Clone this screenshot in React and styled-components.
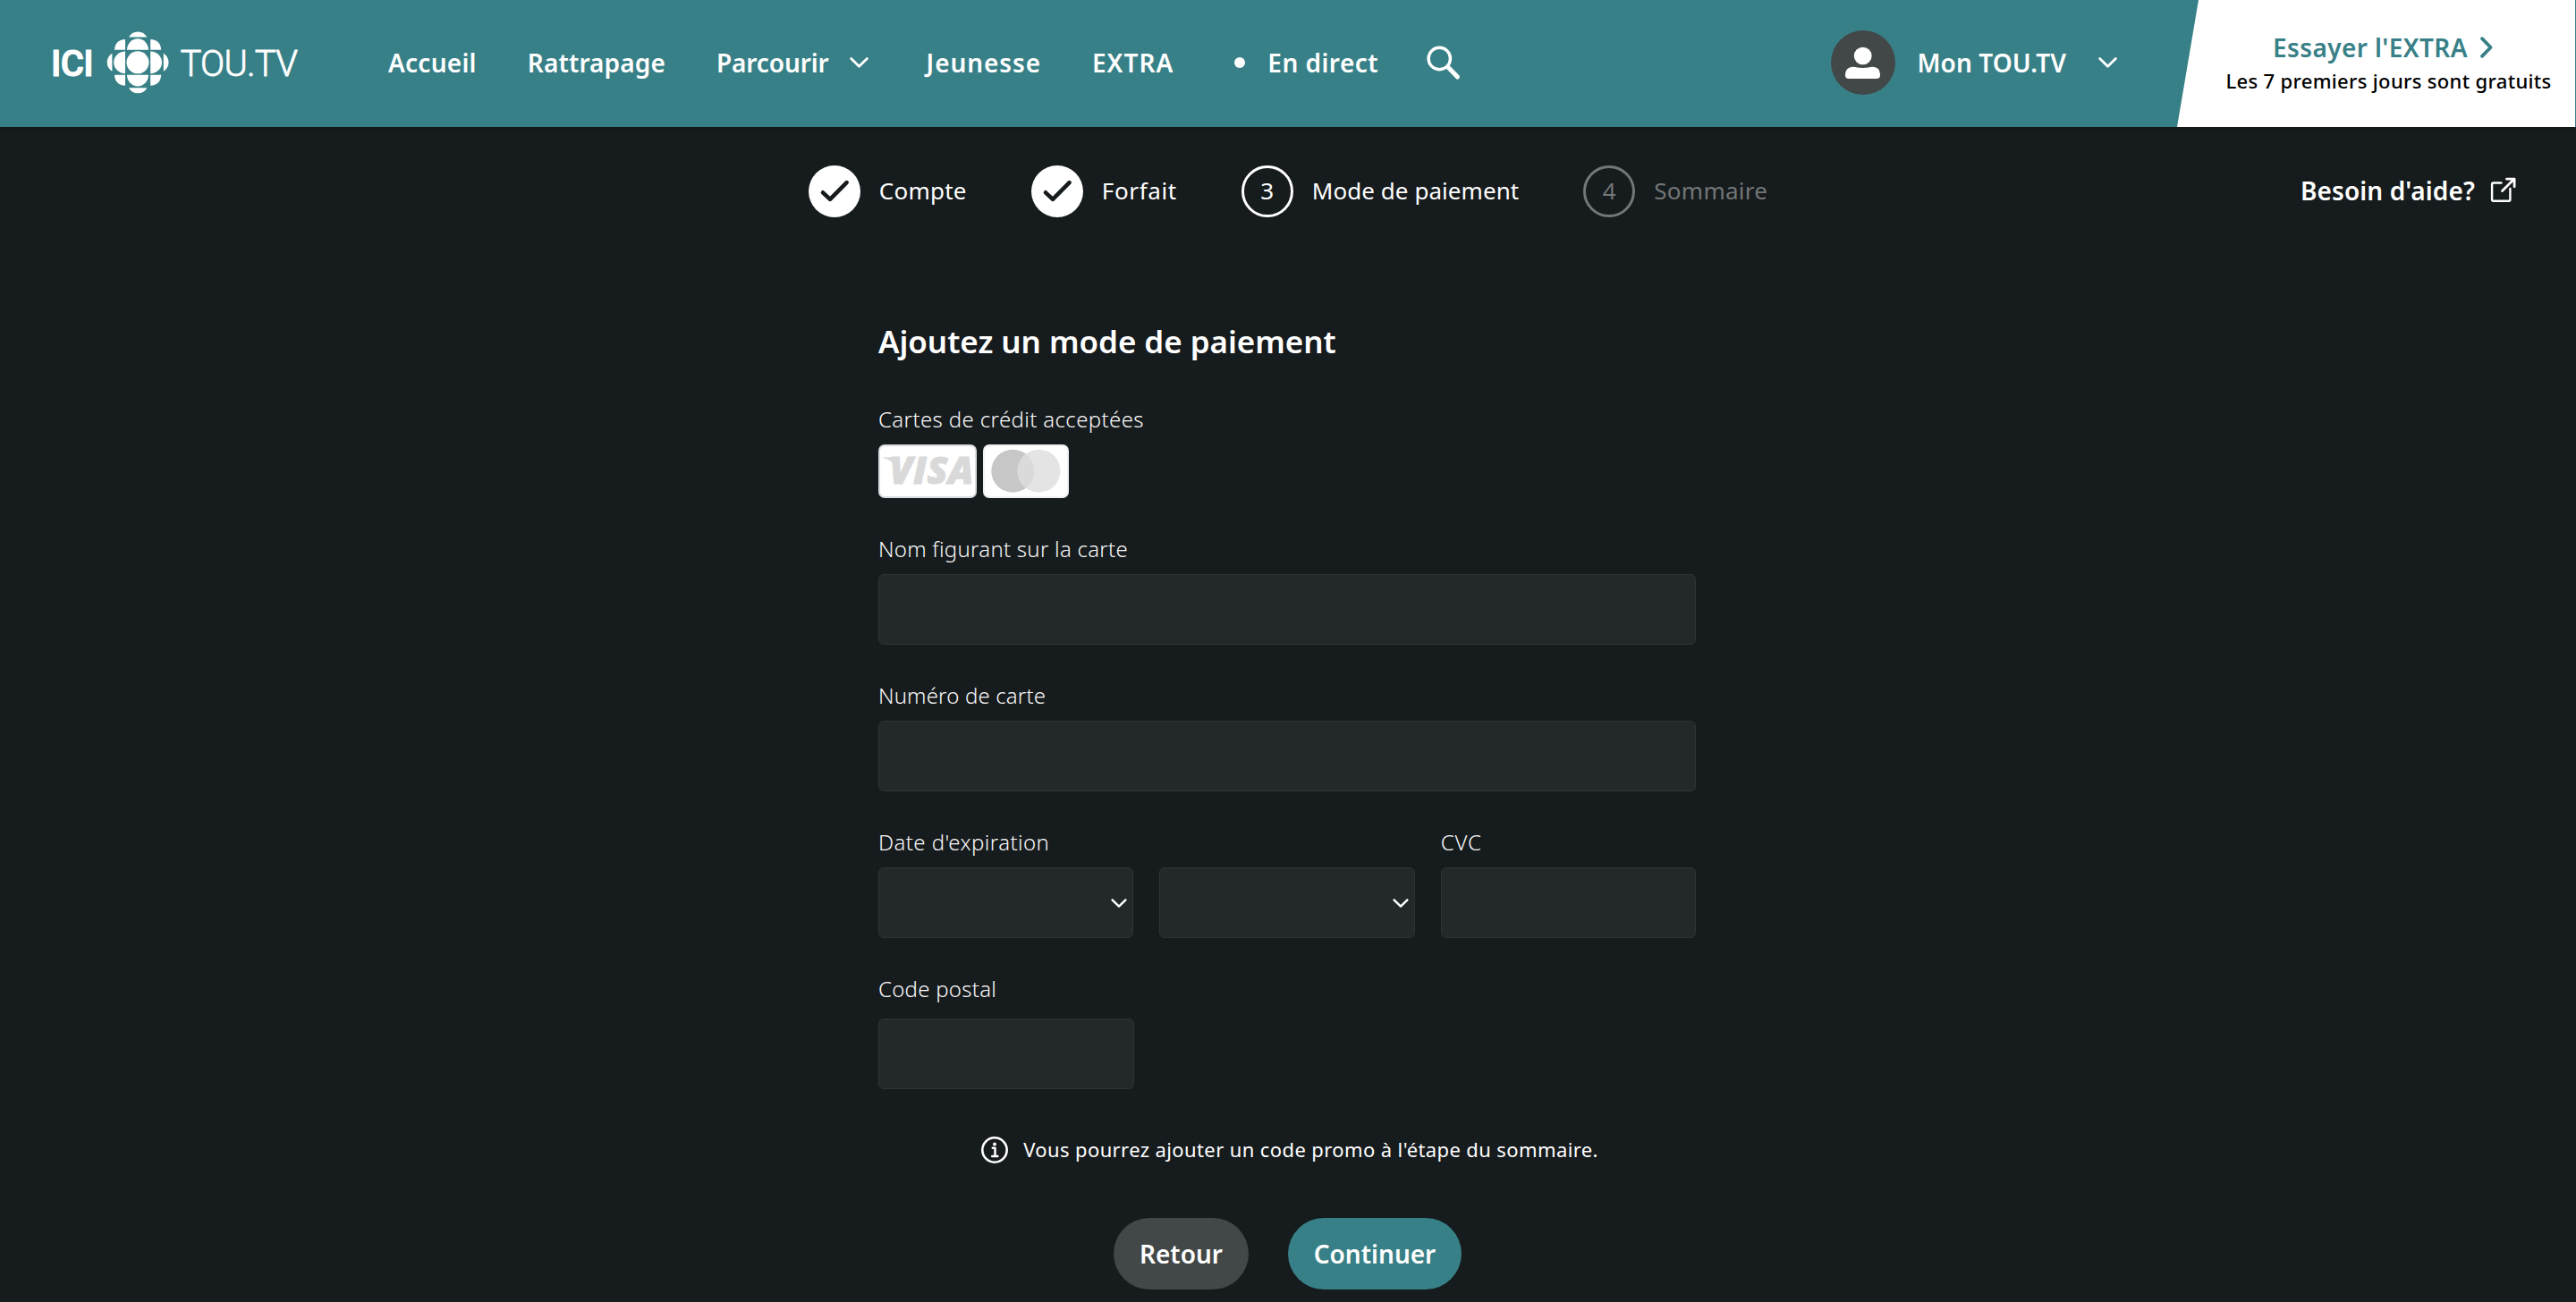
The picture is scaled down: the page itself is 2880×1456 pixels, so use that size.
import styled, { createGlobalStyle } from "styled-components";

const navItems = [
  { label: "Accueil", spacing: 0.25 },
  { label: "Rattrapage", spacing: 0.12 },
  { label: "Parcourir", spacing: -0.1, hasMenu: true },
  { label: "Jeunesse", spacing: 0.9, offset: 8 },
  { label: "EXTRA", spacing: 1.02 },
];

const steps = [
  { id: 1, label: "Compte", status: "done", spacing: 0.25 },
  { id: 2, label: "Forfait", status: "done", spacing: 0.63 },
  { id: 3, label: "Mode de paiement", status: "current", spacing: 0.06 },
  { id: 4, label: "Sommaire", status: "todo", spacing: 0.27 },
];

const Gem = () => (
  <g>
    <circle cx="154" cy="69.8" r="12.5" />
    <path d="M142 55.8a12 12.6 0 0 1 24 0z" />
    <path d="M142 83.8a12 12.6 0 0 0 24 0z" />
    <path d="M140 57.4v24.8a12.8 12.4 0 0 1 0-24.8z" />
    <path d="M168.2 57.4v24.8a12.8 12.4 0 0 0 0-24.8z" />
    <path d="M144 41.6a11.6 11.6 0 0 1 20.4 0z" />
    <path d="M144 98.2a11.6 11.6 0 0 0 20.4 0z" />
    <path d="M125.4 59.8v20a11.6 11.6 0 0 1 0-20z" />
    <path d="M182.8 59.8v20a11.6 11.6 0 0 0 0-20z" />
    <path d="M140 44v11.8h-12q.6-11 12-11.8z" />
    <path d="M168.2 44v11.8h12q-.6-11-12-11.8z" />
    <path d="M140 95.8V83.8h-12q.6 11.2 12 12z" />
    <path d="M168.2 95.8V83.8h12q-.6 11.2-12 12z" />
  </g>
);

const Logo = () => (
  <LogoSvg viewBox="50 30 290 80">
    <Gem />
    <LogoText x="57" y="84.5" textLength="47.5" $weight={500} $stroke={1.2}>
      ICI
    </LogoText>
    <LogoText x="201.5" y="84.5" textLength="131.5" $weight={300} $stroke={0.8}>
      TOU.TV
    </LogoText>
  </LogoSvg>
);

const CheckIcon = () => (
  <svg width="58" height="58" viewBox="0 0 58 58">
    <Stroke d="M16 30.3l8 7.6 18.6-18.7" $width={4.6} $color="#161b1d" />
  </svg>
);

const Chevron = ({ width = 21, height = 12, stroke = 2.8 }) => (
  <svg width={width} height={height} viewBox="0 0 21 12">
    <Stroke d="M1.6 1.6l8.9 8.7 8.9-8.7" $width={stroke} />
  </svg>
);

const SearchIcon = () => (
  <svg width="38" height="38" viewBox="0 0 38 38">
    <circle cx="14.3" cy="14.5" r="12.2" fill="none" stroke="#fff" strokeWidth="3.4" />
    <Stroke d="M23.5 23.7l11 11.3" $width={5} />
  </svg>
);

const UserIcon = () => (
  <svg width="72" height="72" viewBox="0 0 72 72" fill="#fff">
    <ellipse cx="35.7" cy="28.5" rx="9.9" ry="9.8" />
    <path d="M20.5 54q-4.5 0-4.5-3.5C16 44 19 41 25 40.8c3 0 6 1.3 10.7 1.3s7.7-1.3 10.7-1.3C52.5 41 55 44 55 50.5q0 3.5-4.5 3.5z" />
  </svg>
);

const ExternalIcon = () => (
  <svg width="29" height="29" viewBox="0 0 29 29">
    <Stroke
      d="M12.5 6.5H3.6a1.5 1.5 0 0 0-1.5 1.5v17.3a1.5 1.5 0 0 0 1.5 1.5h17.3a1.5 1.5 0 0 0 1.5-1.5V13"
      $width={2.4}
    />
    <Stroke d="M13.5 15.5L26.5 2.6M18.5 2.2h8.6v8.6" $width={2.8} />
  </svg>
);

const InfoIcon = () => (
  <svg width="30" height="30" viewBox="0 0 30 30">
    <circle cx="15" cy="15" r="13.7" fill="none" stroke="#fff" strokeWidth="2.6" />
    <circle cx="15" cy="8.6" r="2" fill="#fff" />
    <Stroke d="M12.8 12.8h2.7v8.9M12.2 22h6.2" $width={2.5} />
  </svg>
);

const VisaCard = () => (
  <Card $width={110} $border="#d9dce0">
    <svg width="106" height="56" viewBox="984 499 106 56">
      <path d="M988 511.3h12l2.5 12c-2.5-5-8-9.5-14.5-11z" fill="#d9d9d9" />
      <CardText x="994.5" y="541" textLength="94">
        VISA
      </CardText>
    </svg>
  </Card>
);

const MasterCard = () => (
  <Card $width={96} $border="#f1f1f2">
    <svg width="92" height="56" viewBox="2 2 92 56">
      <circle cx="33.3" cy="29.7" r="24" fill="#c7c7c7" />
      <circle cx="62.5" cy="29.7" r="24" fill="#e4e4e4" />
      <path d="M47.9 10.7a24 24 0 0 1 0 38a24 24 0 0 1 0-38z" fill="#dadada" />
    </svg>
  </Card>
);

const App = () => {
  return (
    <>
      <GlobalStyle />
      <Header>
        <Logo />
        <Nav>
          {navItems.map((item) => (
            <NavLink key={item.label} $spacing={item.spacing} $offset={item.offset}>
              {item.label}
              {item.hasMenu && <Chevron />}
            </NavLink>
          ))}
          <LiveLink $spacing={0.47}>
            <Dot />
            En direct
          </LiveLink>
          <SearchIcon />
        </Nav>
        <Account>
          <Avatar>
            <UserIcon />
          </Avatar>
          <span>Mon TOU.TV</span>
          <Chevron />
        </Account>
        <Promo>
          <PromoTitle>
            Essayer l'EXTRA
            <svg width="34" height="24" viewBox="0 0 34 24">
              <Stroke d="M9 2.2l9.6 9.8L9 21.800" $width={3.8} $color="#388087" />
            </svg>
          </PromoTitle>
          <PromoText>Les 7 premiers jours sont gratuits</PromoText>
        </Promo>
      </Header>

      <StepBar>
        <Steps>
          {steps.map(({ id, label, status, spacing }) => (
            <Step key={id} $status={status}>
              <StepCircle $status={status}>{status === "done" ? <CheckIcon /> : id}</StepCircle>
              <StepLabel $spacing={spacing}>{label}</StepLabel>
            </Step>
          ))}
        </Steps>
        <Help>
          Besoin d'aide?
          <ExternalIcon />
        </Help>
      </StepBar>

      <Form>
        <Title>Ajoutez un mode de paiement</Title>
        <Field>
          <Label>Cartes de crédit acceptées</Label>
          <Cards>
            <VisaCard />
            <MasterCard />
          </Cards>
        </Field>
        <Field>
          <Label $spacing={0.25}>Nom figurant sur la carte</Label>
          <Input />
        </Field>
        <Field>
          <Label $spacing={0.15}>Numéro de carte</Label>
          <Input />
        </Field>
        <Columns>
          <Field>
            <Label $spacing={0.42}>Date d'expiration</Label>
            <Select>
              <Chevron width={18} height={10} stroke={2.9} />
            </Select>
          </Field>
          <Field>
            <Select>
              <Chevron width={18} height={10} stroke={2.9} />
            </Select>
          </Field>
          <Field>
            <Label $spacing={0.8}>CVC</Label>
            <Input />
          </Field>
        </Columns>
        <Field $gap={17}>
          <Label $spacing={0.25}>Code postal</Label>
          <Input $width={286} />
        </Field>
        <Info>
          <InfoIcon />
          <span>Vous pourrez ajouter un code promo à l'étape du sommaire.</span>
        </Info>
        <Actions>
          <Button $width={151}>Retour</Button>
          <Button $width={194} $primary>
            Continuer
          </Button>
        </Actions>
      </Form>
    </>
  );
};

const GlobalStyle = createGlobalStyle`
  * {
    box-sizing: border-box;
  }
  body {
    margin: 0;
    background: #161b1d;
    color: #fff;
    font-family: "Noto Sans", "Open Sans", sans-serif;
  }
  svg {
    display: block;
    flex-shrink: 0;
    overflow: visible;
  }
`;

const Stroke = styled.path`
  fill: none;
  stroke: ${(props) => props.$color || "#fff"};
  stroke-width: ${(props) => props.$width};
  stroke-linecap: round;
  stroke-linejoin: round;
`;

const Header = styled.header`
  display: flex;
  align-items: center;
  height: 142px;
  padding: 0 1px 2px 50px;
  background: #388087;
  font-size: 28px;
  font-weight: 600;
  line-height: 38px;
  box-shadow: 0 2px 8px rgba(0, 0, 0, 0.2);
`;
const LogoSvg = styled.svg`
  width: 290px;
  height: 80px;
  fill: #fff;
`;
const LogoText = styled.text`
  font-family: Roboto, sans-serif;
  font-size: 40px;
  font-weight: ${(props) => props.$weight};
  stroke: #fff;
  stroke-width: ${(props) => props.$stroke}px;
  stroke-linejoin: round;
`;
const Nav = styled.nav`
  display: flex;
  align-items: center;
  gap: 57px;
  margin-left: 94px;
`;
const NavLink = styled.a`
  display: flex;
  align-items: center;
  gap: 23px;
  margin-left: ${(props) => props.$offset || 0}px;
  letter-spacing: ${(props) => props.$spacing}px;
  white-space: nowrap;
`;
const LiveLink = styled(NavLink)`
  gap: 25px;
  margin: 0 -3px 0 11px;
`;
const Dot = styled.span`
  width: 12px;
  height: 12px;
  border-radius: 50%;
  background: #fff;
`;
const Account = styled.div`
  display: flex;
  align-items: center;
  margin: 0 67px 0 auto;
  white-space: nowrap;
  letter-spacing: 0.1px;

  span {
    margin: 0 36px 0 24px;
  }
`;
const Avatar = styled.div`
  width: 72px;
  height: 72px;
  border-radius: 50%;
  background: #424747;
`;
const Promo = styled.div`
  display: flex;
  flex-direction: column;
  align-items: center;
  width: 445px;
  height: 142px;
  margin-bottom: -2px;
  padding: 34px 0 0 28px;
  background: #fff;
  clip-path: polygon(24px 0, 100% 0, 100% 100%, 0 100%);
`;
const PromoTitle = styled.div`
  display: flex;
  align-items: center;
  gap: 7px;
  color: #388087;
  letter-spacing: 0.4px;
`;
const PromoText = styled.div`
  color: #000;
  font-size: 22px;
  font-weight: 500;
  line-height: 36px;
  letter-spacing: 0.34px;
`;

const StepBar = styled.div`
  display: grid;
  grid-template-columns: 1fr auto 1fr;
  align-items: center;
  margin: 43px 67px 0;
`;
const Steps = styled.div`
  display: flex;
  grid-column: 2;
  gap: 72px;
`;
const Step = styled.div`
  display: flex;
  align-items: center;
  gap: 21px;
  color: ${(props) => (props.$status === "todo" ? "#727677" : "#fff")};
  font-size: 26px;
`;
const StepCircle = styled.div`
  display: flex;
  align-items: center;
  justify-content: center;
  width: 58px;
  height: 58px;
  padding-bottom: ${(props) => (props.$status === "done" ? 0 : 2)}px;
  border: ${(props) => (props.$status === "done" ? "none" : "3px solid currentColor")};
  border-radius: 50%;
  background: ${(props) => (props.$status === "done" ? "#fff" : "none")};
`;
const StepLabel = styled.span`
  padding-bottom: 2px;
  letter-spacing: ${(props) => props.$spacing}px;
`;
const Help = styled.a`
  display: flex;
  align-items: center;
  justify-self: end;
  gap: 17px;
  padding-bottom: 2px;
  font-size: 28px;
  font-weight: 600;
  letter-spacing: 0.11px;

  svg {
    margin-bottom: 2px;
  }
`;

const Form = styled.main`
  display: flex;
  flex-direction: column;
  gap: 41px;
  width: 916px;
  margin: 115px auto 0;
  padding-right: 2px;
`;
const Title = styled.h1`
  margin: 0 0 6px;
  font-size: 35px;
  font-weight: 600;
  line-height: 48px;
  letter-spacing: -0.05px;
`;
const Field = styled.div`
  display: flex;
  flex-direction: column;
  justify-content: flex-end;
  gap: ${(props) => props.$gap || 12}px;
`;
const Label = styled.label`
  color: #f8f8f8;
  font-size: 24px;
  font-weight: 300;
  line-height: 32px;
  letter-spacing: ${(props) => props.$spacing || 0.37}px;
`;
const Input = styled.input`
  width: ${(props) => (props.$width ? props.$width + "px" : "100%")};
  height: 79px;
  border: 1px solid #2e3335;
  border-radius: 6px;
  background: #23282a;
`;
const Select = styled.div`
  display: flex;
  align-items: center;
  justify-content: flex-end;
  height: 79px;
  padding-right: 6px;
  border: 1px solid #2e3335;
  border-radius: 6px;
  background: #23282a;
`;
const Columns = styled.div`
  display: grid;
  grid-template-columns: repeat(3, 1fr);
  gap: 29px;
`;
const Cards = styled.div`
  display: flex;
  gap: 7px;
`;
const Card = styled.div`
  width: ${(props) => props.$width}px;
  height: 60px;
  border: 2px solid ${(props) => props.$border};
  border-radius: 7px;
  background: #fff;
`;
const CardText = styled.text`
  fill: #d9d9d9;
  stroke: #d9d9d9;
  stroke-width: 1px;
  font-family: "Open Sans", sans-serif;
  font-size: 42px;
  font-style: italic;
  font-weight: 800;
`;
const Info = styled.p`
  display: flex;
  align-items: center;
  justify-content: center;
  gap: 17px;
  height: 32px;
  margin: 11px 0 0 6px;
  font-size: 22px;
  letter-spacing: 0.39px;
  white-space: nowrap;

  span {
    padding-bottom: 3px;
  }
`;
const Actions = styled.div`
  display: flex;
  justify-content: center;
  gap: 44px;
  margin-top: 19px;
`;
const Button = styled.button`
  width: ${(props) => props.$width}px;
  height: 80px;
  padding: 0 0 0 1px;
  border: none;
  border-radius: 40px;
  background: ${(props) => (props.$primary ? "#388087" : "#424747")};
  color: #fff;
  font-family: inherit;
  font-size: 28px;
  font-weight: 600;
`;

export default App;
